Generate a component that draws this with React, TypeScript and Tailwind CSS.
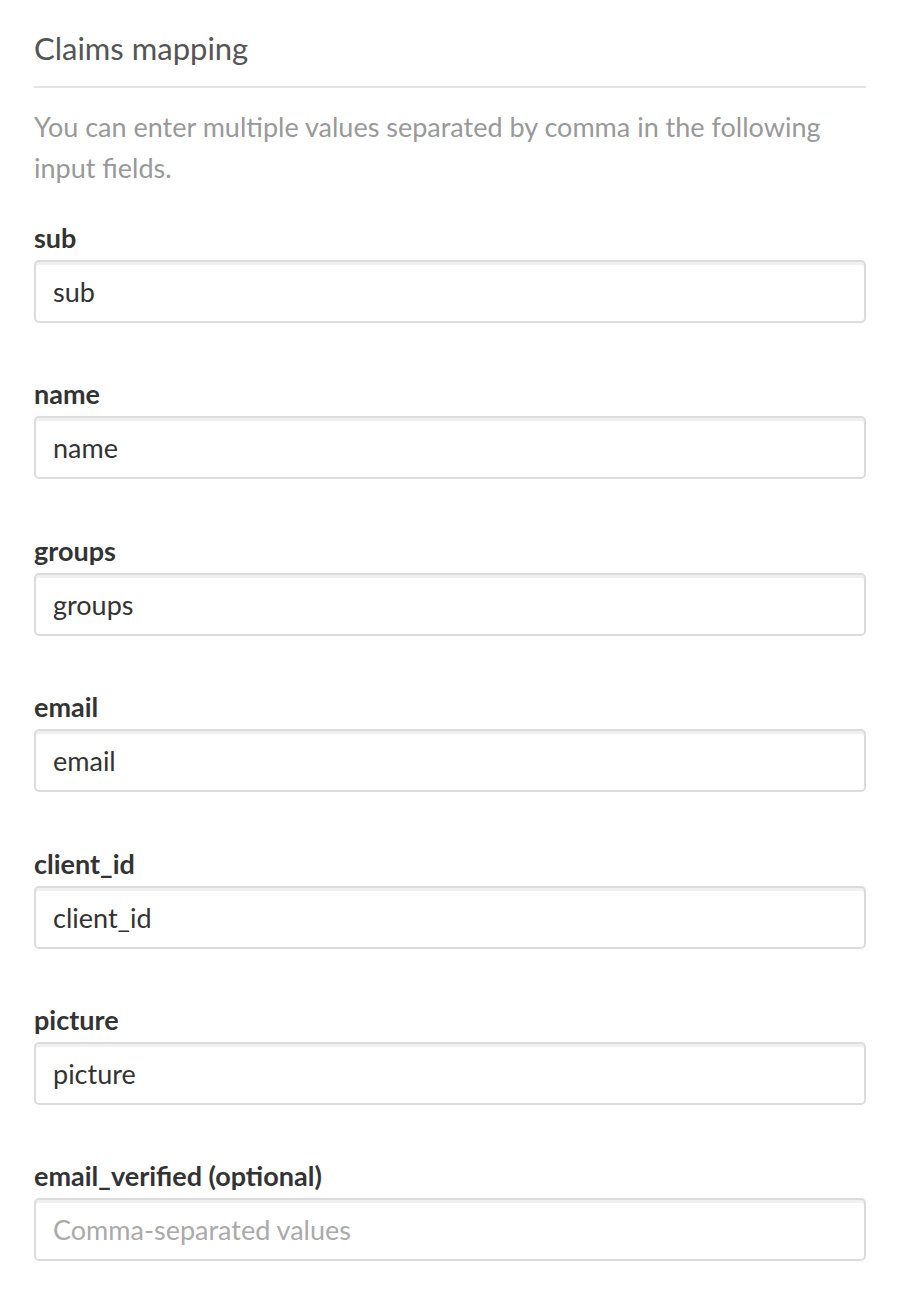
import React from 'react';

const fields = [
  { label: 'sub', value: 'sub' },
  { label: 'name', value: 'name' },
  { label: 'groups', value: 'groups' },
  { label: 'email', value: 'email' },
  { label: 'client_id', value: 'client_id' },
  { label: 'picture', value: 'picture' },
  { label: 'email_verified (optional)', value: '' },
];

const App: React.FC = () => {
  return (
    <div className="min-h-[1296px] bg-white pl-[34px] pr-[46px] pt-[26px] font-['Lato',sans-serif]">
      <h3 className="text-[31px] leading-[44px] text-[#555] pb-[16px] border-b-2 border-[#e3e3e3]">Claims mapping</h3>
      <p className="mt-[18px] text-[27px] leading-[41px] text-[#999]">
        You can enter multiple values separated by comma in the following input fields.
      </p>
      <div className="mt-[32px]">
        {fields.map(f => (
          <div key={f.label} className="mb-[53.4px]">
            <label className="block text-[27px] leading-[36px] font-bold text-[#333] mb-[4px]">{f.label}</label>
            <input
              readOnly
              value={f.value}
              placeholder="Comma-separated values"
              className="w-full h-[63px] border-2 border-[#dcdcdc] rounded-[5px] px-[17px] text-[27px] text-[#333] placeholder-[#aaa] shadow-[inset_0_3px_0_#f0f0f0] outline-none"
            />
          </div>
        ))}
      </div>
    </div>
  );
};

export default App;
